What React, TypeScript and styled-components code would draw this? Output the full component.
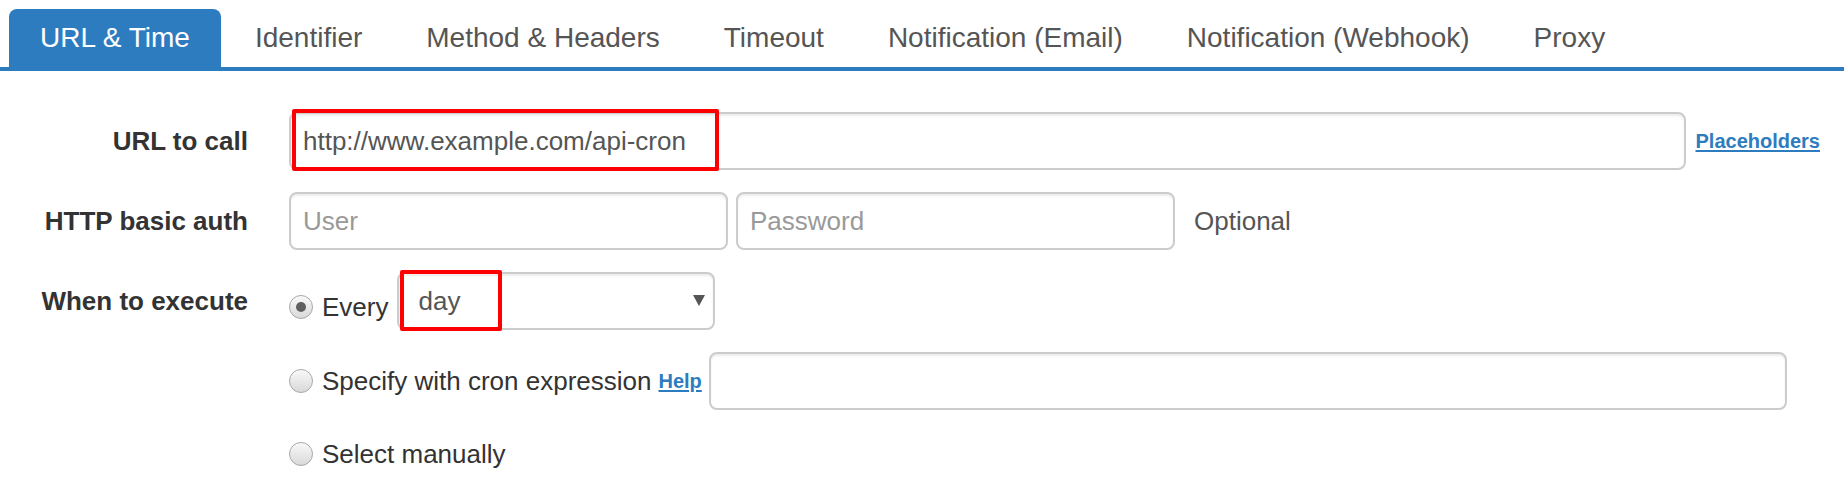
import React from "react";
import styled, { createGlobalStyle, css } from "styled-components";

const GlobalStyle = createGlobalStyle`
  html, body {
    margin: 0;
    padding: 0;
    background: #ffffff;
  }
  body {
    font-family: "Liberation Sans", Arial, Helvetica, sans-serif;
    color: #333333;
  }
  * { box-sizing: border-box; }
`;

const BLUE = "#2e7cc0";

const Page = styled.div`
  width: 1844px;
  height: 488px;
  overflow: hidden;
  padding-top: 9px;
`;

const TabBar = styled.ul`
  display: flex;
  margin: 0;
  padding: 0 0 0 9px;
  list-style: none;
  border-bottom: 4px solid ${BLUE};
`;

const Tab = styled.li<{ $active?: boolean }>`
  margin-right: 4px;
  padding: 9px 30px;
  font-size: 28px;
  line-height: 40px;
  border-radius: 8px 8px 0 0;
  color: #555555;
  white-space: nowrap;
  cursor: pointer;
  ${(p) =>
    p.$active &&
    css`
      background: ${BLUE};
      color: #ffffff;
      padding: 9px 31px;
    `}
`;

const Form = styled.form`
  display: flex;
  flex-direction: column;
  gap: 22px;
  padding-top: 41px;
`;

const FormRow = styled.div<{ $height?: number }>`
  display: flex;
  align-items: center;
  height: ${(p) => p.$height ?? 58}px;
`;

const Label = styled.label`
  flex: 0 0 248px;
  text-align: right;
  font-size: 26px;
  font-weight: bold;
  color: #333333;
`;

const Controls = styled.div`
  flex: 1;
  display: flex;
  align-items: center;
  margin-left: 41px;
  padding-right: 24px;
  height: 100%;
`;

const FieldWrap = styled.div<{ $width?: number; $grow?: boolean; $gapLeft?: number }>`
  position: relative;
  height: 58px;
  flex: ${(p) => (p.$grow ? "1 1 auto" : `0 0 ${p.$width}px`)};
  margin-left: ${(p) => p.$gapLeft ?? 0}px;
`;

const fieldBase = css`
  width: 100%;
  height: 100%;
  border: 2px solid #cccccc;
  border-radius: 8px;
  background: #ffffff;
  box-shadow: inset 0 2px 2px rgba(0, 0, 0, 0.075);
  font-family: "Liberation Sans", Arial, Helvetica, sans-serif;
  font-size: 26px;
  color: #555555;
  outline: none;
`;

const TextInput = styled.input`
  ${fieldBase};
  padding: 0 12px;
  &::placeholder {
    color: #999999;
    opacity: 1;
  }
`;

const Select = styled.select`
  ${fieldBase};
  appearance: none;
  -webkit-appearance: none;
  padding: 0 19px;
`;

const SelectArrow = styled.svg`
  position: absolute;
  right: 10px;
  top: 23px;
  width: 12px;
  height: 11px;
  pointer-events: none;
`;

const Highlight = styled.div<{ $left: number; $top: number; $w: number; $h: number }>`
  position: absolute;
  left: ${(p) => p.$left}px;
  top: ${(p) => p.$top}px;
  width: ${(p) => p.$w}px;
  height: ${(p) => p.$h}px;
  border: 4px solid #ff0000;
  border-radius: 2px;
  pointer-events: none;
`;

const SmallLink = styled.a<{ $gapLeft: number; $gapRight: number }>`
  font-size: 20px;
  font-weight: bold;
  color: ${BLUE};
  text-decoration: underline;
  text-decoration-thickness: 2px;
  text-underline-offset: 2px;
  margin-left: ${(p) => p.$gapLeft}px;
  margin-right: ${(p) => p.$gapRight}px;
  cursor: pointer;
  white-space: nowrap;
`;

const Note = styled.span<{ $gapLeft: number }>`
  font-size: 26px;
  color: #555555;
  margin-left: ${(p) => p.$gapLeft}px;
`;

const RadioOption = styled.label<{ $shift?: number; $gapRight?: number }>`
  display: flex;
  align-items: center;
  gap: 9px;
  font-size: 26px;
  color: #333333;
  margin-top: ${(p) => p.$shift ?? 0}px;
  margin-right: ${(p) => p.$gapRight ?? 9}px;
  white-space: nowrap;
`;

const RadioCircle = styled.span<{ $checked?: boolean }>`
  position: relative;
  flex: 0 0 24px;
  width: 24px;
  height: 24px;
  border-radius: 50%;
  border: 1px solid #a6a6a6;
  background: linear-gradient(#f8f8f8, #d9d9d9);
  box-shadow: inset 0 1px 1px rgba(255, 255, 255, 0.8);
  ${(p) =>
    p.$checked &&
    css`
      &::after {
        content: "";
        position: absolute;
        left: 6px;
        top: 6px;
        width: 10px;
        height: 10px;
        border-radius: 50%;
        background: #5f5f5f;
      }
    `}
`;

const Spacer = styled.div`
  flex: 0 0 248px;
`;

const tabs = [
  "URL & Time",
  "Identifier",
  "Method & Headers",
  "Timeout",
  "Notification (Email)",
  "Notification (Webhook)",
  "Proxy",
];

export default function App() {
  return (
    <Page>
      <GlobalStyle />
      <TabBar>
        {tabs.map((t, i) => (
          <Tab key={t} $active={i === 0}>
            {t}
          </Tab>
        ))}
      </TabBar>
      <Form onSubmit={(e) => e.preventDefault()}>
        <FormRow>
          <Label>URL to call</Label>
          <Controls>
            <FieldWrap $grow>
              <TextInput defaultValue="http://www.example.com/api-cron" />
              <Highlight $left={3} $top={-3} $w={427} $h={62} />
            </FieldWrap>
            <SmallLink $gapLeft={9} $gapRight={0}>
              Placeholders
            </SmallLink>
          </Controls>
        </FormRow>

        <FormRow>
          <Label>HTTP basic auth</Label>
          <Controls>
            <FieldWrap $width={439}>
              <TextInput placeholder="User" />
            </FieldWrap>
            <FieldWrap $width={439} $gapLeft={8}>
              <TextInput placeholder="Password" type="password" />
            </FieldWrap>
            <Note $gapLeft={19}>Optional</Note>
          </Controls>
        </FormRow>

        <FormRow>
          <Label>When to execute</Label>
          <Controls>
            <RadioOption $shift={12}>
              <RadioCircle $checked />
              Every
            </RadioOption>
            <FieldWrap $width={318}>
              <Select defaultValue="day">
                <option value="minute">minute</option>
                <option value="hour">hour</option>
                <option value="day">day</option>
                <option value="week">week</option>
                <option value="month">month</option>
              </Select>
              <SelectArrow viewBox="0 0 12 11">
                <path d="M0 0 L12 0 L6 11 Z" fill="#555555" />
              </SelectArrow>
              <Highlight $left={3} $top={-2} $w={102} $h={61} />
            </FieldWrap>
          </Controls>
        </FormRow>

        <FormRow>
          <Spacer />
          <Controls>
            <RadioOption $gapRight={0}>
              <RadioCircle />
              Specify with cron expression
            </RadioOption>
            <SmallLink $gapLeft={7} $gapRight={7}>
              Help
            </SmallLink>
            <FieldWrap $width={1078}>
              <TextInput />
            </FieldWrap>
          </Controls>
        </FormRow>

        <FormRow $height={44}>
          <Spacer />
          <Controls>
            <RadioOption>
              <RadioCircle />
              Select manually
            </RadioOption>
          </Controls>
        </FormRow>
      </Form>
    </Page>
  );
}
